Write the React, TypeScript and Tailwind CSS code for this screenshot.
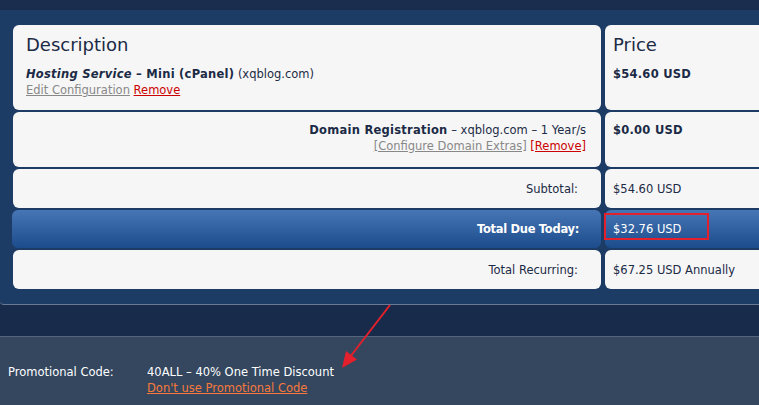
const cell = "bg-[#f6f6f6] rounded-[6px] text-[#1b2a45]";
const strong = "font-bold tracking-[0.25px]";

export default function App() {
  return (
    <div className="relative w-[759px] h-[405px] overflow-hidden bg-[#192b4a] font-['DejaVu_Sans',sans-serif] text-[11.5px] leading-[16px]">
      <div className="h-[10px] bg-[#1a2d4e]" />

      {/* cart panel */}
      <div className="bg-[#1d3c65] pl-[13px] pt-[15px] pb-[15px] border-b border-[#6a7a94] rounded-bl-[4px]">
        <div className="grid grid-cols-[588px_200px] gap-x-[4px] gap-y-[2px]">
          <div className={`${cell} h-[85px] px-[13px] pt-[8px]`}>
            <div className="text-[18px] leading-[24px]">Description</div>
            <div className="mt-[9px]">
              <span className={strong}>
                <i>Hosting Service</i> – Mini (cPanel)
              </span>{" "}
              (xqblog.com)
            </div>
            <div>
              <a className="text-[#888888] underline">Edit Configuration</a>{" "}
              <a className="text-[#cc0000] underline">Remove</a>
            </div>
          </div>
          <div className={`${cell} rounded-r-none h-[85px] px-[8px] pt-[8px]`}>
            <div className="text-[18px] leading-[24px]">Price</div>
            <div className={`mt-[9px] ${strong}`}>$54.60 USD</div>
          </div>

          <div className={`${cell} h-[55px] pr-[15px] pt-[10px] text-right`}>
            <div>
              <span className={strong}>Domain Registration</span> – xqblog.com – 1 Year/s
            </div>
            <div className="leading-[17px]">
              <a className="text-[#888888] underline">[Configure Domain Extras]</a>{" "}
              <a className="text-[#cc0000] underline">[Remove]</a>
            </div>
          </div>
          <div className={`${cell} rounded-r-none h-[55px] px-[8px] pt-[10px] ${strong}`}>
            $0.00 USD
          </div>

          <div className={`${cell} h-[39px] flex items-center justify-end pr-[23px]`}>
            Subtotal:
          </div>
          <div className={`${cell} rounded-r-none h-[39px] flex items-center px-[8px]`}>
            $54.60 USD
          </div>

          <div className="h-[38px] -ml-[1px] rounded-[6px] bg-gradient-to-b from-[#4676b5] to-[#1d4c8c] flex items-center justify-end pr-[22px] text-white font-bold tracking-[-0.3px]">
            Total Due Today:
          </div>
          <div className="relative h-[38px] bg-gradient-to-b from-[#4676b5] to-[#1d4c8c] rounded-l-[6px] flex items-center px-[8px] text-white">
            $32.76 USD
            <div className="absolute left-[-1px] top-[3px] w-[105px] h-[27px] border-2 border-[#e3202b]" />
          </div>

          <div className={`${cell} h-[39px] flex items-center justify-end pr-[23px]`}>
            Total Recurring:
          </div>
          <div className={`${cell} rounded-r-none h-[39px] flex items-center px-[8px]`}>
            $67.25 USD Annually
          </div>
        </div>
      </div>

      <div className="h-[31px]" />

      {/* promo */}
      <div className="h-[69px] bg-[#34475f] border-t border-[#56657d] pt-[27px] pl-[8px] text-white">
        <div className="flex">
          <div className="w-[139px]">Promotional Code:</div>
          <div>
            <div>40ALL – 40% One Time Discount</div>
            <a className="text-[#f7793b] underline">Don't use Promotional Code</a>
          </div>
        </div>
      </div>

      <svg className="absolute left-0 top-0 pointer-events-none" width="759" height="405">
        <line x1="390" y1="305" x2="350" y2="357" stroke="#e3202b" strokeWidth="2" />
        <polygon points="342,368 346,351 357,359.5" fill="#e3202b" />
      </svg>
    </div>
  );
}
